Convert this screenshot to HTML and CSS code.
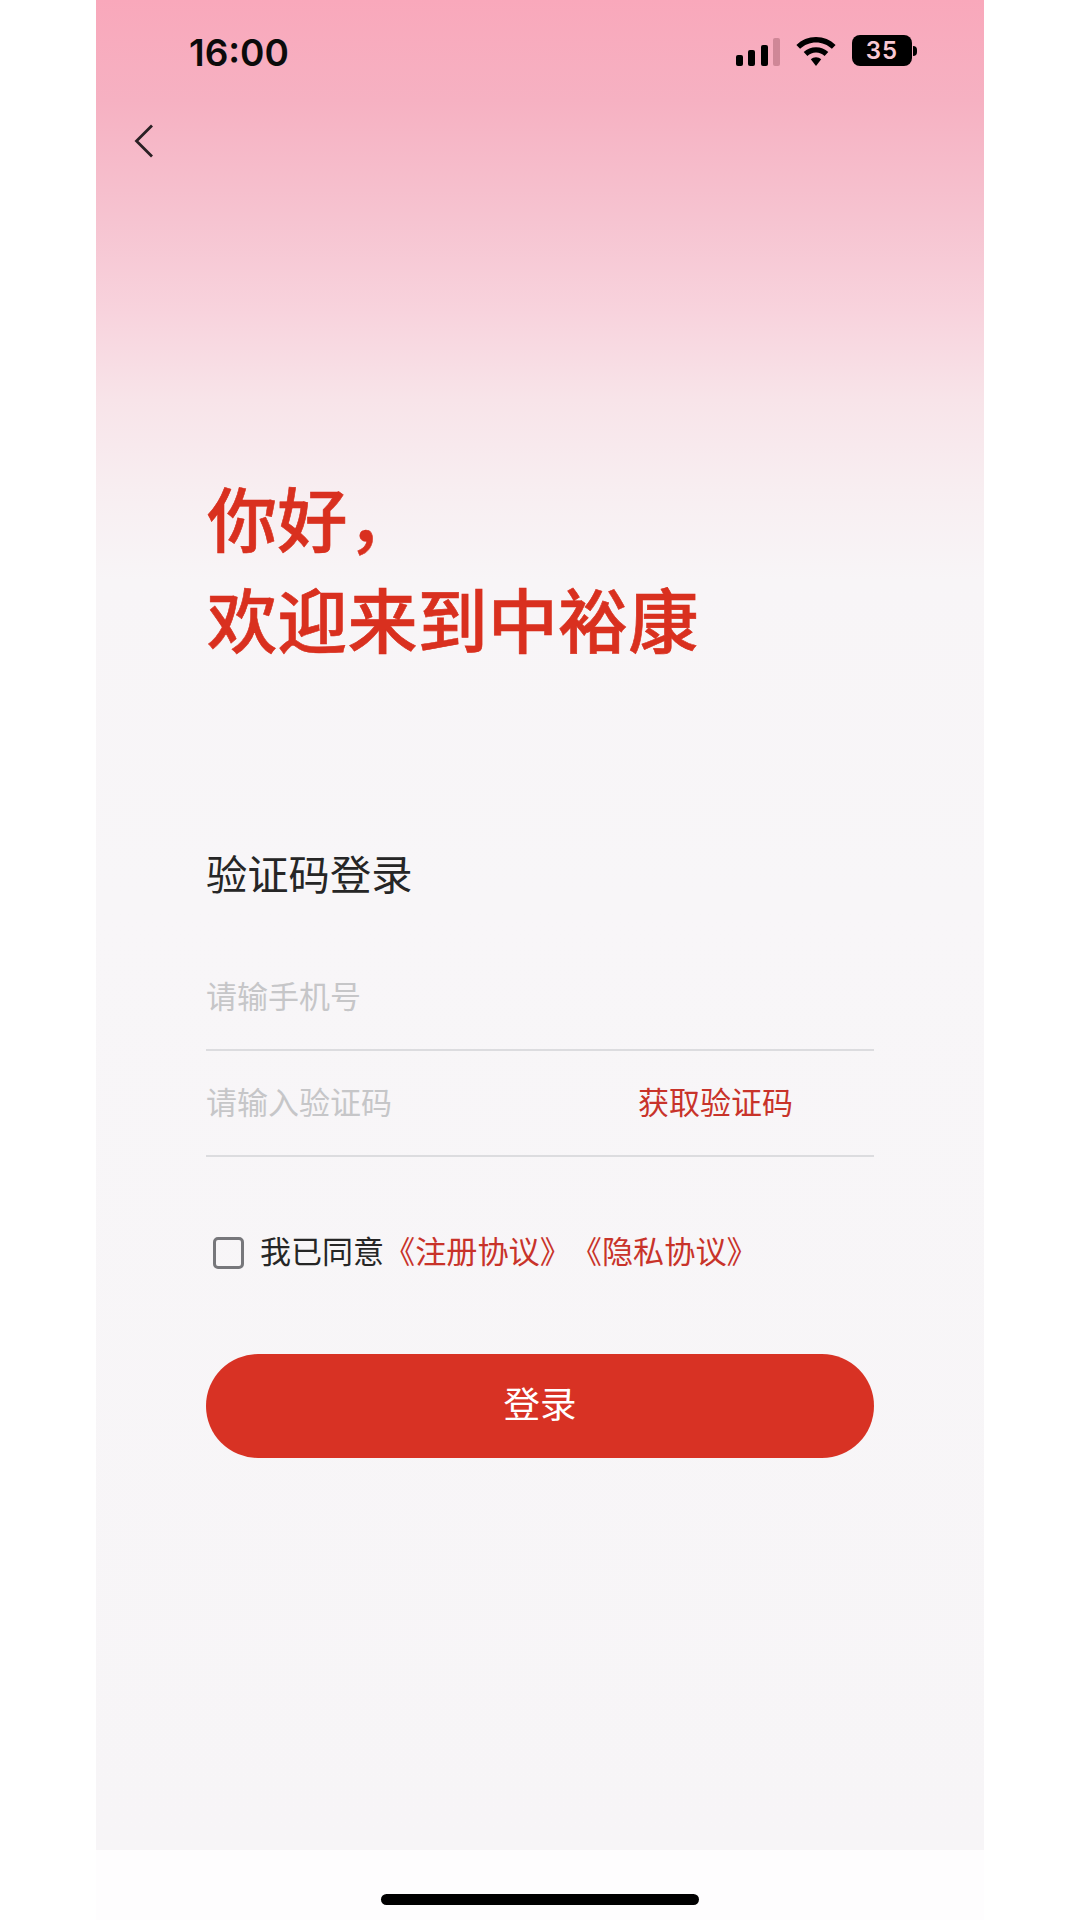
FILE: index.html
```html
<!DOCTYPE html>
<html lang="zh-CN">
  <head>
    <meta charset="UTF-8" />
    <meta name="viewport" content="width=device-width, initial-scale=1.0" />
    <title>验证码登录</title>
    <link rel="stylesheet" href="styles.css">
  </head>
  <body>
    <div class="phone">
      <div class="screen">
        <!-- Status bar -->
        <header class="status-bar">
          <span class="time">16:00</span>
          <div class="status-icons">
            <div class="signal">
              <span class="bar bar-1"></span>
              <span class="bar bar-2"></span>
              <span class="bar bar-3"></span>
              <span class="bar bar-4"></span>
            </div>
            <svg class="wifi" viewBox="0 0 40 29" width="40" height="29">
              <path d="M20 0C12.400 0 5.600 3 0.400 7.900L4.100 11.800C8.300 7.900 13.900 5.500 20 5.500S31.700 7.900 35.900 11.800L39.600 7.900C34.400 3 27.600 0 20 0Z" />
              <path d="M20 10.200C15.300 10.200 11 12 7.700 15.100L11.400 19C13.700 16.900 16.700 15.600 20 15.600S26.300 16.900 28.600 19L32.300 15.100C29 12 24.700 10.200 20 10.200Z" />
              <path d="M20 20.300C18 20.300 16.200 21 14.800 22.300L20 29L25.200 22.300C23.800 21 22 20.300 20 20.300Z" />
            </svg>
            <div class="battery">
              <span class="battery-body">35</span>
              <span class="battery-nub"></span>
            </div>
          </div>
        </header>

        <nav class="nav">
          <svg class="back" viewBox="0 0 20 34" width="20" height="34">
            <path d="M18 1.500L2.500 17L18 32.500" />
          </svg>
        </nav>

        <main class="content">
          <h1 class="welcome">你好，<br />欢迎来到中裕康</h1>

          <h2 class="form-title">验证码登录</h2>

          <form class="login-form">
            <div class="field">
              <input type="text" placeholder="请输手机号" />
            </div>
            <div class="field">
              <input type="text" placeholder="请输入验证码" />
              <a class="get-code">获取验证码</a>
            </div>

            <div class="agreement">
              <span class="checkbox"></span>
              <span class="agree-text">我已同意</span>
              <a class="agree-link">《注册协议》</a>
              <a class="agree-link">《隐私协议》</a>
            </div>

            <button type="button" class="login-btn">登录</button>
          </form>
        </main>
      </div>

      <div class="home-area">
        <span class="home-indicator"></span>
      </div>
    </div>
  </body>
</html>
```

FILE: styles.css
```css
* {
  box-sizing: border-box;
}
body {
  margin: 0;
  padding: 0;
  background-color: #ffffff;
  font-family: "Noto Sans CJK SC", "Noto Sans", sans-serif;
}
.phone {
  width: 888px;
  height: 1920px;
  margin: 0 auto;
  background-color: #fefdfe;
}
.screen {
  height: 1850px;
  background: linear-gradient(
    180deg,
    #f9a8bb 0,
    #f6b1c2 100px,
    #f6c4d1 223px,
    #f8d3dd 312px,
    #f8e4e9 400px,
    #f8eef1 490px,
    #f8f5f7 580px,
    #f8f6f8 900px,
    #f7f5f7 100%
  );
}

/* Status bar */
.status-bar {
  height: 90px;
  padding: 35px 67px 0 93px;
  display: flex;
  justify-content: space-between;
  align-items: flex-start;
}
.time {
  font-family: Inter, sans-serif;
  font-size: 37px;
  font-weight: 600;
  line-height: 36px;
  color: #0b0b0b;
}
.status-icons {
  display: flex;
  align-items: flex-end;
  height: 31px;
}
.signal {
  display: flex;
  align-items: flex-end;
  gap: 5.500px;
  margin-right: 16px;
}
.bar {
  width: 7px;
  border-radius: 2px;
  background-color: #000000;
}
.bar-1 {
  height: 11px;
}
.bar-2 {
  height: 16px;
}
.bar-3 {
  height: 21px;
}
.bar-4 {
  height: 28px;
  background-color: #cf8797;
}
.wifi {
  fill: #000000;
  margin-right: 16px;
}
.battery {
  display: flex;
  align-items: center;
  gap: 1px;
}
.battery-body {
  width: 60px;
  height: 31px;
  border-radius: 8px;
  background-color: #000000;
  color: #f8c8d2;
  font-family: Inter, sans-serif;
  font-size: 24px;
  font-weight: 600;
  letter-spacing: 1px;
  line-height: 31px;
  text-align: center;
}
.battery-nub {
  width: 4px;
  height: 10px;
  border-radius: 0 5px 5px 0;
  background-color: #000000;
}

/* Back arrow */
.nav {
  height: 52px;
  padding: 34px 0 0 38px;
}
.back {
  display: block;
  fill: none;
  stroke: #2a2024;
  stroke-width: 2.800;
}

.content {
  padding: 0 110px;
}
.welcome {
  margin: 0;
  padding: 324px 0 0 1px;
  font-size: 70.200px;
  font-weight: 500;
  -webkit-text-stroke: 0.600px #d9301f;
  line-height: 101px;
  color: #d9301f;
}
.form-title {
  margin: 176px 0 45px;
  font-size: 41.300px;
  font-weight: 400;
  line-height: 56px;
  color: #262626;
}

/* Form */
.field {
  height: 106px;
  padding-bottom: 6px;
  display: flex;
  align-items: center;
  justify-content: space-between;
  border-bottom: 2px solid #dcdcdf;
}
.field input {
  flex: 1;
  min-width: 0;
  padding: 0;
  border: none;
  outline: none;
  background: transparent;
  font-family: inherit;
  font-size: 31px;
  color: #262626;
}
.field input::placeholder {
  color: #c6c6c8;
  opacity: 1;
}
.get-code {
  margin-right: 81px;
  font-size: 31px;
  color: #c8332a;
}
.agreement {
  margin-top: 80px;
  height: 32px;
  display: flex;
  align-items: flex-start;
  padding-left: 7px;
  font-size: 31px;
  line-height: 26px;
}
.checkbox {
  width: 31px;
  height: 32px;
  margin-right: 16px;
  border: 3px solid #77777b;
  border-radius: 5px;
}
.agree-text {
  color: #262626;
}
.agree-link {
  font-size: 31.150px;
  color: #c8332a;
}
.login-btn {
  display: block;
  width: 100%;
  height: 104px;
  margin-top: 85px;
  padding: 0 0 7px;
  border: none;
  border-radius: 52px;
  background-color: #d83224;
  color: #ffffff;
  font-family: inherit;
  font-size: 36.500px;
  cursor: pointer;
}

/* Home indicator */
.home-area {
  height: 70px;
  padding-top: 44px;
  display: flex;
  justify-content: center;
}
.home-indicator {
  width: 318px;
  height: 11px;
  border-radius: 6px;
  background-color: #000000;
}
```
